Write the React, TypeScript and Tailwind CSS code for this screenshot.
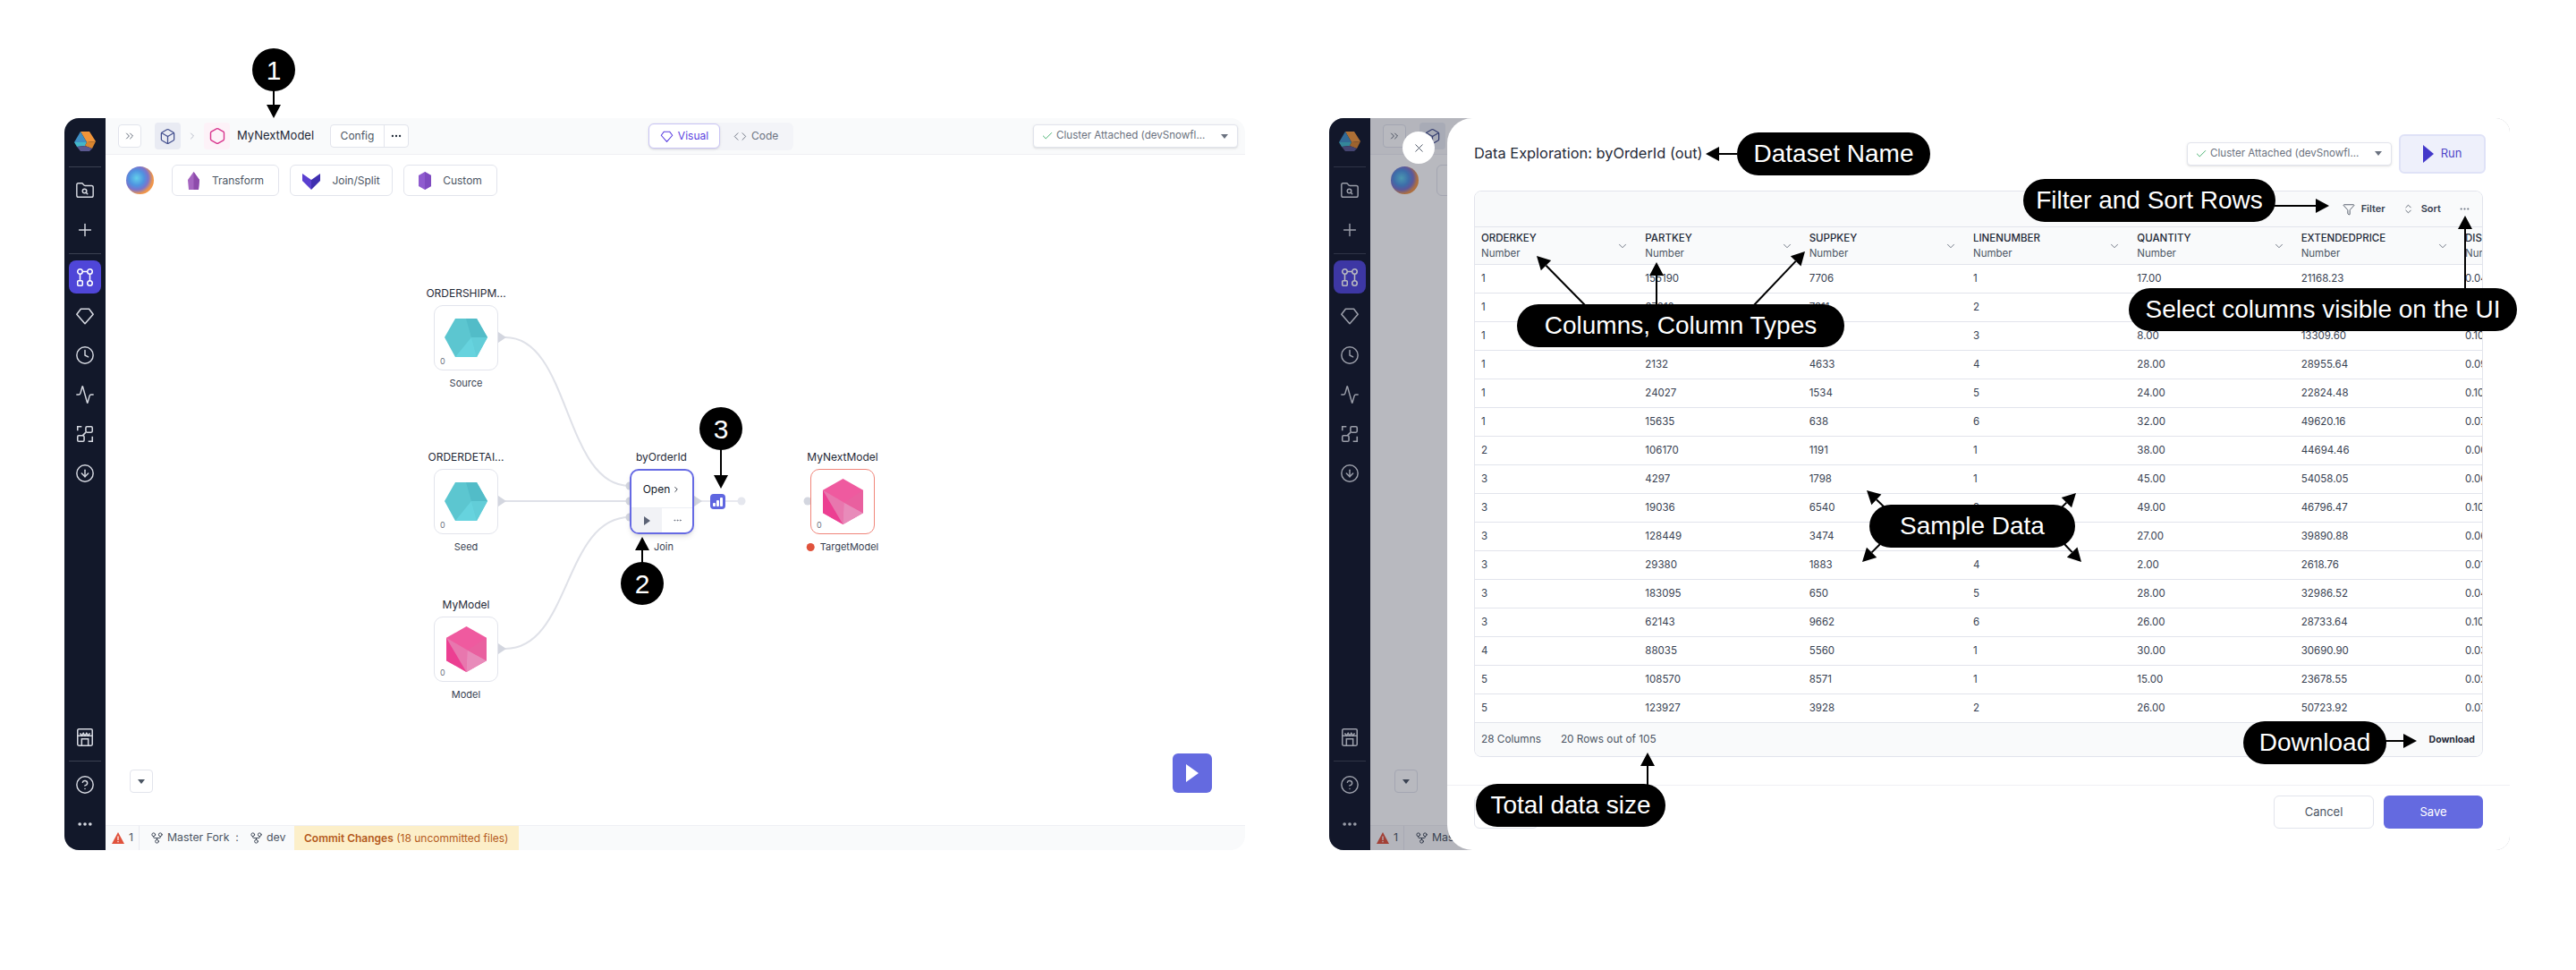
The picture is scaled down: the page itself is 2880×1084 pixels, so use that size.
import {
  Box,
  Check,
  ChevronDown,
  ChevronRight,
  ChevronsRight,
  ChevronsUpDown,
  CircleArrowDown,
  CircleHelp,
  Clock,
  Activity,
  Code,
  Ellipsis,
  Filter,
  FolderSearch2,
  GitFork,
  Hexagon,
  Plus,
  X,
} from 'lucide-react'

const Gem = ({className = ''}: {className?: string}) => (
  <svg viewBox="0 0 24 24" fill="none" stroke="currentColor" strokeWidth="1.7" strokeLinejoin="round" className={className}>
    <path d="M7 3.5h10l5 6.5-10 11.5L2 10z" />
  </svg>
)

const NodesIcon = () => (
  <svg viewBox="0 0 24 24" fill="none" stroke="currentColor" strokeWidth="1.7" className="w-[22px] h-[22px]">
    <circle cx="6" cy="5" r="3" />
    <circle cx="18" cy="5" r="3" />
    <path d="M9 5h6M6 8v8M18 8v8" />
    <rect x="3" y="16" width="6" height="6" rx="1" />
    <circle cx="18" cy="19" r="3" />
  </svg>
)

const GraphIcon = () => (
  <svg viewBox="0 0 24 24" fill="none" stroke="currentColor" strokeWidth="1.7" className="w-[22px] h-[22px]">
    <rect x="13" y="3" width="8" height="7" rx="1.5" />
    <rect x="3" y="14" width="8" height="7" rx="1.5" />
    <path d="M13 10l-4 4M3 8V3h5M21 15v6h-5" />
  </svg>
)

const StoreIcon = () => (
  <svg viewBox="0 0 24 24" fill="none" stroke="currentColor" strokeWidth="1.7" className="w-[22px] h-[24px]">
    <rect x="3" y="2" width="18" height="20" rx="1.5" />
    <path d="M3 10h18M6 7l2 3 2-3 2 3 2-3 2 3 2-3" />
    <path d="M8 22v-8h8v8" />
  </svg>
)

const Logo = () => (
  <svg viewBox="0 0 24 22" className="w-6 h-[22px]">
    <polygon points="7,0 17,0 24,11 14,12" fill="#f0953a" />
    <polygon points="7,0 14,12 0,12" fill="#3f8fc4" />
    <polygon points="0,12 14,12 12,16 3,17" fill="#43b7c9" />
    <polygon points="14,12 24,11 20,19 12,16" fill="#d9852f" />
    <polygon points="3,17 12,16 20,19 17,22 7,22" fill="#5a5890" />
  </svg>
)

const Orb = ({className = ''}: {className?: string}) => (
  <div
    className={`w-[31px] h-[31px] rounded-full bg-[radial-gradient(circle_at_38%_42%,#63d0ea_0%,#4f93e0_32%,#7a74cc_50%,#f0964a_68%)] ${className}`}
  />
)

const TealHex = () => (
  <svg viewBox="0 0 48 43" className="w-12 h-[43px]">
    <polygon points="12,0 36,0 48,21 36,43 12,43 0,21" fill="#5cc6d0" />
    <polygon points="24,0 36,0 48,21 30,21" fill="#52bcc8" />
    <polygon points="30,21 48,21 36,43" fill="#62cdd8" />
    <polygon points="12,43 30,21 36,43" fill="#66d3de" />
  </svg>
)

const PinkHex = () => (
  <svg viewBox="0 0 46 52" className="w-[45px] h-[51px]">
    <polygon points="23,0 46,13 46,39 23,52 0,39 0,13" fill="#ef5a9f" />
    <polygon points="0,13 23,52 0,39" fill="#ec3f92" />
    <polygon points="0,13 24,27 23,52" fill="#e877ae" />
    <polygon points="24,27 46,39 23,52" fill="#e88bba" />
    <polygon points="46,13 46,39 24,27" fill="#e9609f" />
  </svg>
)

const TransformIcon = () => (
  <svg viewBox="0 0 15 20" className="w-[15px] h-5">
    <polygon points="7.5,0 14,9 13,20 2,20 1,9" fill="#a565c0" />
    <polygon points="7.5,0 14,9 13,20 7.5,20" fill="#8d4bab" />
  </svg>
)

const JoinIcon = () => (
  <svg viewBox="0 0 20 20" className="w-5 h-5">
    <polygon points="0,2 10,9 10,20 0,10" fill="#5a3fd0" />
    <polygon points="20,2 10,9 10,20 20,10" fill="#3f2fb0" />
  </svg>
)

const CustomIcon = () => (
  <svg viewBox="0 0 14 20" className="w-[14px] h-5">
    <polygon points="7,0 14,4 14,16 7,20 0,16 0,4" fill="#8f5bcf" />
    <polygon points="7,0 14,4 14,16 7,20" fill="#7f4bc0" />
  </svg>
)

const Sidebar = () => (
  <div className="w-[46px] flex-none bg-[#12182a] text-[#d5d8e0] flex flex-col items-center">
    <div className="h-[54px] w-full flex items-center justify-center pb-[4px] pt-[2px]">
      <Logo />
    </div>
    <div className="w-9 h-px bg-[#3b4152]" />
    <FolderSearch2 size={22} strokeWidth={1.6} className="mt-[15px]" />
    <Plus size={22} strokeWidth={1.6} className="mt-[22px]" />
    <div className="w-9 h-px bg-[#3b4152] mt-[15px]" />
    <div className="w-9 h-[37px] mt-[7px] rounded-lg bg-[#4f46d8] text-white flex items-center justify-center">
      <NodesIcon />
    </div>
    <Gem className="w-[22px] h-[22px] mt-[14px]" />
    <Clock size={22} strokeWidth={1.6} className="mt-[22px]" />
    <Activity size={22} strokeWidth={1.6} className="mt-[22px]" />
    <div className="mt-[22px] flex"><GraphIcon /></div>
    <CircleArrowDown size={22} strokeWidth={1.6} className="mt-[22px]" />
    <div className="mt-auto flex"><StoreIcon /></div>
    <div className="w-9 h-px bg-[#3b4152] mt-[14px]" />
    <CircleHelp size={22} strokeWidth={1.6} className="mt-[15px]" />
    <Ellipsis size={20} strokeWidth={2.4} className="mt-[23px] mb-[19px]" />
  </div>
)

const Cluster = () => (
  <div className="w-[229px] h-[26px] flex items-center pl-2 pr-[10px] gap-[3px] bg-white border border-[#e2e4ec] rounded text-[11.6px] text-[#6b7280] shadow-sm">
    <Check size={14} strokeWidth={1.6} className="text-[#3fae6a] flex-none" />
    <span className="flex-1 whitespace-nowrap">Cluster Attached (devSnowfl...</span>
    <span className="w-0 h-0 border-x-[4px] border-x-transparent border-t-[5px] border-t-[#6b7280]" />
  </div>
)

const TopBar = () => (
  <div className="h-[41px] flex-none flex items-center bg-[#f9fafb] border-b border-[#eff0f4]">
    <div className="w-[607px] flex-none flex items-center pl-[14px]">
      <div className="w-[26px] h-[26px] flex items-center justify-center bg-white border border-[#e2e4ec] rounded text-[#4b5563]">
        <ChevronsRight size={14} strokeWidth={1.5} />
      </div>
      <div className="w-[29px] h-[30px] ml-[15px] rounded bg-[#e9ebf3] flex items-center justify-center text-[#44508f]">
        <Box size={19} strokeWidth={1.6} />
      </div>
      <ChevronRight size={12} className="mx-[7px] text-[#b9bdc9]" />
      <div className="w-[29px] h-[30px] rounded bg-[#fdf2f8] flex items-center justify-center text-[#d9378f]">
        <Hexagon size={20} strokeWidth={1.7} />
      </div>
      <span className="ml-2 w-[85px] text-[13px] text-[#1f2937] whitespace-nowrap">MyNextModel</span>
      <div className="ml-[19px] h-[26px] flex items-center bg-white border border-[#e2e4ec] rounded text-[12px] text-[#4b5563]">
        <span className="w-[60px] text-center border-r border-[#e2e4ec] leading-[24px]">Config</span>
        <span className="w-[26px] flex justify-center text-[#1f2937]"><Ellipsis size={14} /></span>
      </div>
    </div>
    <div className="h-[31px] w-[162px] flex items-center rounded-md bg-[#f3f4f8] text-[12px]">
      <div className="w-[80px] h-[28px] flex items-center justify-center gap-[5px] rounded-md bg-white border border-[#c9c4f5] text-[#5b3fe0] shadow-sm">
        <Gem className="w-[15px] h-[15px]" />
        Visual
      </div>
      <div className="flex items-center gap-[5px] ml-[15px] text-[#6b7280]">
        <Code size={15} strokeWidth={1.5} />
        Code
      </div>
    </div>
    <div className="ml-auto mr-2"><Cluster /></div>
  </div>
)

const PaletteButton = ({icon, label, width}: {icon: React.ReactNode; label: string; width: string}) => (
  <div className={`h-[35px] flex items-center justify-center gap-[13px] bg-white border border-[#e2e4ec] rounded-md text-[12px] text-[#4b5563] ${width}`}>
    {icon}
    {label}
  </div>
)

const Palette = () => (
  <div className="flex items-center pl-[23px] pt-[11px] gap-3">
    <Orb className="mr-2" />
    <PaletteButton icon={<TransformIcon />} label="Transform" width="w-[120px]" />
    <PaletteButton icon={<JoinIcon />} label="Join/Split" width="w-[115px]" />
    <PaletteButton icon={<CustomIcon />} label="Custom" width="w-[105px]" />
  </div>
)

const Branch = ({label}: {label: string}) => (
  <div className="flex items-center gap-[4px] whitespace-nowrap">
    <GitFork size={15} strokeWidth={1.5} className="text-[#374151] flex-none" />
    <span>{label}</span>
  </div>
)

const StatusBar = () => (
  <div className="h-[28px] flex-none flex items-center bg-[#f9fafb] border-t border-[#eff0f4] text-[12.3px] text-[#4b5563]">
    <div className="h-full w-[38px] flex items-center pl-[7px] gap-[5px] border-r border-[#e8e9ef]">
      <svg viewBox="0 0 14 13" className="w-[14px] h-[13px] flex-none">
        <path d="M7 0l7 13H0z" fill="#e0523c" />
        <path d="M6.4 4.5h1.2v4.5H6.4zM6.4 10h1.2v1.3H6.4z" fill="#fff" />
      </svg>
      1
    </div>
    <div className="ml-3 w-[90px]"><Branch label="Master Fork" /></div>
    <span className="w-[14px] text-center">:</span>
    <div className="ml-[7px] w-[50px]"><Branch label="dev" /></div>
    <div className="h-full w-[251px] flex items-center pl-[11px] bg-[#fcefc9] text-[#b45a20] text-[12px] whitespace-nowrap">
      <span className="font-semibold">Commit Changes</span>&nbsp;(18 uncommitted files)
    </div>
  </div>
)

const Canvas = ({children}: {children?: React.ReactNode}) => (
  <div className="flex-1 relative">
    <div className="absolute left-[27px] bottom-[36px] w-[26px] h-[26px] bg-white border border-[#e2e4ec] rounded flex items-center justify-center">
      <span className="w-0 h-0 border-x-[4px] border-x-transparent border-t-[5px] border-t-[#4b5563]" />
    </div>
    {children}
  </div>
)

const Shell = ({children, canvas}: {children?: React.ReactNode; canvas?: React.ReactNode}) => (
  <div className="relative w-[1320px] h-[818px] flex-none flex overflow-hidden rounded-2xl bg-white">
    <Sidebar />
    <div className="flex-1 flex flex-col min-w-0">
      <TopBar />
      <Palette />
      <Canvas>{canvas}</Canvas>
      <StatusBar />
    </div>
    {children}
  </div>
)

/* graph nodes, placed on the canvas; canvas origin is at page (118, 219) */
const NodeCard = ({
  title,
  kind,
  place,
  icon,
  target,
}: {
  title: string
  kind: string
  place: string
  icon: React.ReactNode
  target?: boolean
}) => (
  <div className={`absolute w-[72px] h-[73px] ${place}`}>
    <div className="absolute -top-[21px] left-1/2 -translate-x-1/2 whitespace-nowrap text-[12px] leading-[16px] text-[#1f2937]">
      {title}
    </div>
    <div
      className={`w-full h-full rounded-[10px] bg-white border flex items-center justify-center relative ${target ? 'border-[#f0857a]' : 'border-[#e2e4ec]'}`}
    >
      {icon}
      <span className="absolute left-[6px] bottom-[3px] text-[9px] text-[#6b7280]">0</span>
    </div>
    <div className="absolute top-[79px] left-1/2 -translate-x-1/2 whitespace-nowrap flex items-center gap-[6px] text-[11px] leading-[16px] text-[#374151]">
      {target && <span className="w-[9px] h-[9px] rounded-full bg-[#e0523c]" />}
      {kind}
    </div>
  </div>
)

const JoinNode = () => (
  <div className="absolute left-[586px] top-[305px] w-[72px] h-[73px]">
    <div className="absolute -top-[21px] left-[7px] whitespace-nowrap text-[12px] leading-[16px] text-[#1f2937]">byOrderId</div>
    <div className="w-full h-full rounded-[10px] bg-white border-2 border-[#666ae4] shadow-md flex flex-col overflow-hidden">
      <div className="h-[42px] flex items-center justify-center gap-[2px] text-[12px] text-[#111827] border-b border-[#eceef3]">
        Open
        <ChevronRight size={10} />
      </div>
      <div className="flex-1 flex">
        <div className="w-[34px] bg-[#f1f2f6] flex items-center justify-center">
          <span className="w-0 h-0 border-y-[5px] border-y-transparent border-l-[7px] border-l-[#5b6275]" />
        </div>
        <div className="flex-1 flex items-center justify-center text-[#6b7280]"><Ellipsis size={11} /></div>
      </div>
    </div>
    <div className="absolute top-[79px] left-[27px] text-[11px] leading-[16px] text-[#374151]">Join</div>
  </div>
)

const Graph = () => (
  <>
    <svg className="absolute left-0 top-0 w-[1274px] h-[703px] overflow-visible" viewBox="0 0 1274 703" fill="none">
      <g stroke="#dfe1e8" strokeWidth="2">
        <path d="M447 158C520 158 512 324 586 324" />
        <path d="M447 341H586" />
        <path d="M447 506C520 506 512 359 586 359" />
        <path d="M658 341H676M693 341H711" stroke="#e8e9ef" />
      </g>
      <g fill="#d3d6df">
        <path d="M439 152l9 6-9 6zM439 335l9 6-9 6zM439 500l9 6-9 6zM658 335l9 6-9 6z" />
        <circle cx="586" cy="324" r="4.5" />
        <circle cx="586" cy="341" r="4.5" />
        <circle cx="586" cy="359" r="4.5" />
        <circle cx="785" cy="341" r="4.5" />
      </g>
      <circle cx="711" cy="341" r="4.5" fill="#e5e7ee" />
    </svg>
    <NodeCard title="ORDERSHIPM..." kind="Source" place="left-[367px] top-[122px]" icon={<TealHex />} />
    <NodeCard title="ORDERDETAI..." kind="Seed" place="left-[367px] top-[305px]" icon={<TealHex />} />
    <NodeCard title="MyModel" kind="Model" place="left-[367px] top-[470px]" icon={<PinkHex />} />
    <JoinNode />
    <div className="absolute left-[676px] top-[333px] w-[17px] h-[17px] rounded-sm bg-[#5f66e0] flex items-end justify-center gap-[1px] pb-[3px]">
      <span className="w-[3px] h-[4px] bg-white rounded-[1px]" />
      <span className="w-[3px] h-[7px] bg-white rounded-[1px]" />
      <span className="w-[3px] h-[10px] bg-white rounded-[1px]" />
    </div>
    <NodeCard title="MyNextModel" kind="TargetModel" place="left-[788px] top-[305px]" icon={<PinkHex />} target />
    <div className="absolute left-[1193px] top-[623px] w-[44px] h-[44px] rounded-md bg-[#646ae0] flex items-center justify-center">
      <span className="w-0 h-0 border-y-[10px] border-y-transparent border-l-[14px] border-l-white" />
    </div>
  </>
)

const columns = ['ORDERKEY', 'PARTKEY', 'SUPPKEY', 'LINENUMBER', 'QUANTITY', 'EXTENDEDPRICE', 'DISCOUNT']

const rows = [
  ['1', '155190', '7706', '1', '17.00', '21168.23', '0.04'],
  ['1', '67310', '7311', '2', '36.00', '45983.16', '0.09'],
  ['1', '63700', '3701', '3', '8.00', '13309.60', '0.10'],
  ['1', '2132', '4633', '4', '28.00', '28955.64', '0.09'],
  ['1', '24027', '1534', '5', '24.00', '22824.48', '0.10'],
  ['1', '15635', '638', '6', '32.00', '49620.16', '0.07'],
  ['2', '106170', '1191', '1', '38.00', '44694.46', '0.00'],
  ['3', '4297', '1798', '1', '45.00', '54058.05', '0.06'],
  ['3', '19036', '6540', '2', '49.00', '46796.47', '0.10'],
  ['3', '128449', '3474', '3', '27.00', '39890.88', '0.06'],
  ['3', '29380', '1883', '4', '2.00', '2618.76', '0.01'],
  ['3', '183095', '650', '5', '28.00', '32986.52', '0.04'],
  ['3', '62143', '9662', '6', '26.00', '28733.64', '0.10'],
  ['4', '88035', '5560', '1', '30.00', '30690.90', '0.03'],
  ['5', '108570', '8571', '1', '15.00', '23678.55', '0.02'],
  ['5', '123927', '3928', '2', '26.00', '50723.92', '0.07'],
]

const DataTable = () => (
  <div className="w-[1128px] h-[633px] flex flex-col border border-[#e2e4ec] rounded-lg overflow-hidden">
    <div className="h-[40px] flex-none flex items-center justify-end bg-[#f9fafb] border-b border-[#e2e4ec] text-[11px] font-semibold text-[#374151]">
      <Filter size={14} strokeWidth={1.4} className="mr-[7px]" />
      <span>Filter</span>
      <ChevronsUpDown size={13} strokeWidth={1.4} className="ml-[19px] mr-2" />
      <span>Sort</span>
      <Ellipsis size={13} className="ml-[20px] mr-[13px] text-[#6b7280]" />
    </div>
    <div className="h-[42px] flex-none flex bg-[#f9fafb] border-b border-[#e2e4ec]">
      {columns.map(name => (
        <div key={name} className="w-[183.33px] flex-none flex items-center pl-[7px] pr-[11px]">
          <div className="flex-1 text-[11.5px] leading-[17px]">
            <div className="font-medium text-[#1f2937]">{name}</div>
            <div className="text-[#4b5563]">Number</div>
          </div>
          <ChevronDown size={14} strokeWidth={1.6} className="text-[#6b7280]" />
        </div>
      ))}
    </div>
    {rows.map((row, i) => (
      <div key={i} className="h-[32px] flex-none flex items-center border-b border-[#e2e4ec] text-[11.5px] text-[#374151]">
        {row.map((value, j) => (
          <div key={j} className="w-[183.33px] flex-none pl-[7px]">{value}</div>
        ))}
      </div>
    ))}
    <div className="flex-1 flex items-center justify-between bg-[#f9fafb] text-[11.8px] text-[#4b5563] pl-[7px] pr-2">
      <div className="flex gap-[22px]">
        <span>28 Columns</span>
        <span>20 Rows out of 105</span>
      </div>
      <span className="font-bold text-[10.5px] text-[#1f2937]">Download</span>
    </div>
  </div>
)

const Modal = () => (
  <>
    <div className="absolute inset-0 bg-[#14182a]/30" />
    <div className="absolute left-[100px] top-[33px] -translate-x-1/2 -translate-y-1/2 w-9 h-9 rounded-full bg-white flex items-center justify-center text-[#374151]">
      <X size={15} strokeWidth={1.4} />
    </div>
    <div className="absolute left-[132px] top-0 bottom-0 w-[1188px] bg-white rounded-l-[28px] flex flex-col">
      <div className="h-[81px] flex-none flex items-center justify-between pl-[30px] pr-[27px]">
        <span className="text-[16.4px] text-[#1f2937] -mt-[2px]">Data Exploration: byOrderId (out)</span>
        <div className="flex items-center gap-2 -mt-[2px]">
          <Cluster />
          <div className="w-[97px] h-[44px] flex items-center justify-center gap-[8px] rounded-md bg-[#eef0fb] border-2 border-[#dfe2f7] text-[13px] text-[#4f46c8]">
            <span className="w-0 h-0 border-y-[10px] border-y-transparent border-l-[12px] border-l-[#4338ca]" />
            Run
          </div>
        </div>
      </div>
      <div className="pl-[30px]"><DataTable /></div>
      <div className="mt-[31px] border-t border-[#eff0f4] flex items-center justify-between pl-[30px] pr-[30px] pt-[11px]">
        <div className="w-[72px] h-[37px] border border-[#e2e4ec] rounded-md" />
        <div className="flex gap-[11px]">
          <div className="w-[112px] h-[37px] flex items-center justify-center border border-[#e2e4ec] rounded-md text-[13px] text-[#4b5563]">Cancel</div>
          <div className="w-[111px] h-[37px] flex items-center justify-center rounded-md bg-[#646ae0] text-[13px] text-white">Save</div>
        </div>
      </div>
    </div>
  </>
)

/* callouts drawn over the screenshots */
const arrows: number[][] = [
  [306, 100, 306, 132],
  [718, 630, 718, 600],
  [806, 500, 806, 546],
  [1942, 172, 1907, 172],
  [1773, 342, 1718, 286],
  [1852, 342, 1852, 293],
  [1960, 342, 2018, 281],
  [2543, 230, 2604, 230],
  [2756, 324, 2756, 241],
  [2108, 568, 2087, 548],
  [2304, 568, 2321, 551],
  [2102, 608, 2082, 628],
  [2308, 608, 2327, 628],
  [1842, 878, 1842, 841],
  [2666, 828, 2702, 828],
]

const Arrows = () => (
  <svg className="absolute left-0 top-0 w-[2880px] h-[1084px] pointer-events-none" viewBox="0 0 2880 1084">
    {arrows.map(([x1, y1, x2, y2], i) => {
      const len = Math.hypot(x2 - x1, y2 - y1)
      const ux = (x2 - x1) / len
      const uy = (y2 - y1) / len
      const bx = x2 - ux * 15
      const by = y2 - uy * 15
      const head = `${x2},${y2} ${bx - uy * 8},${by + ux * 8} ${bx + uy * 8},${by - ux * 8}`
      return (
        <g key={i}>
          <line x1={x1} y1={y1} x2={bx} y2={by} stroke="#000" strokeWidth="2" />
          <polygon points={head} fill="#000" />
        </g>
      )
    })}
  </svg>
)

const Pill = ({place, children}: {place: string; children: React.ReactNode}) => (
  <div
    className={`absolute h-12 flex items-center justify-center rounded-full bg-black text-white text-[28px] whitespace-nowrap font-['Liberation_Sans',sans-serif] ${place}`}
  >
    {children}
  </div>
)

const Badge = ({place, children}: {place: string; children: React.ReactNode}) => (
  <div
    className={`absolute w-12 h-12 flex items-center justify-center rounded-full bg-black text-white text-[30px] font-['Liberation_Sans',sans-serif] ${place}`}
  >
    {children}
  </div>
)

export default function App() {
  return (
    <div className="relative w-[2880px] h-[1084px] bg-white overflow-hidden font-['Inter',sans-serif]">
      <div className="flex gap-[94px] pl-[72px] pt-[132px]">
        <Shell canvas={<Graph />} />
        <Shell>
          <Modal />
        </Shell>
      </div>
      <Arrows />
      <Badge place="left-[282px] top-[54px]">1</Badge>
      <Badge place="left-[694px] top-[628px]">2</Badge>
      <Badge place="left-[782px] top-[455px]">3</Badge>
      <Pill place="left-[1942px] top-[148px] w-[216px]">Dataset Name</Pill>
      <Pill place="left-[1696px] top-[340px] w-[366px]">Columns, Column Types</Pill>
      <Pill place="left-[2262px] top-[200px] w-[282px]">Filter and Sort Rows</Pill>
      <Pill place="left-[2380px] top-[322px] w-[434px]">Select columns visible on the UI</Pill>
      <Pill place="left-[2090px] top-[564px] w-[230px]">Sample Data</Pill>
      <Pill place="left-[1650px] top-[876px] w-[212px]">Total data size</Pill>
      <Pill place="left-[2508px] top-[806px] w-[160px]">Download</Pill>
    </div>
  )
}
